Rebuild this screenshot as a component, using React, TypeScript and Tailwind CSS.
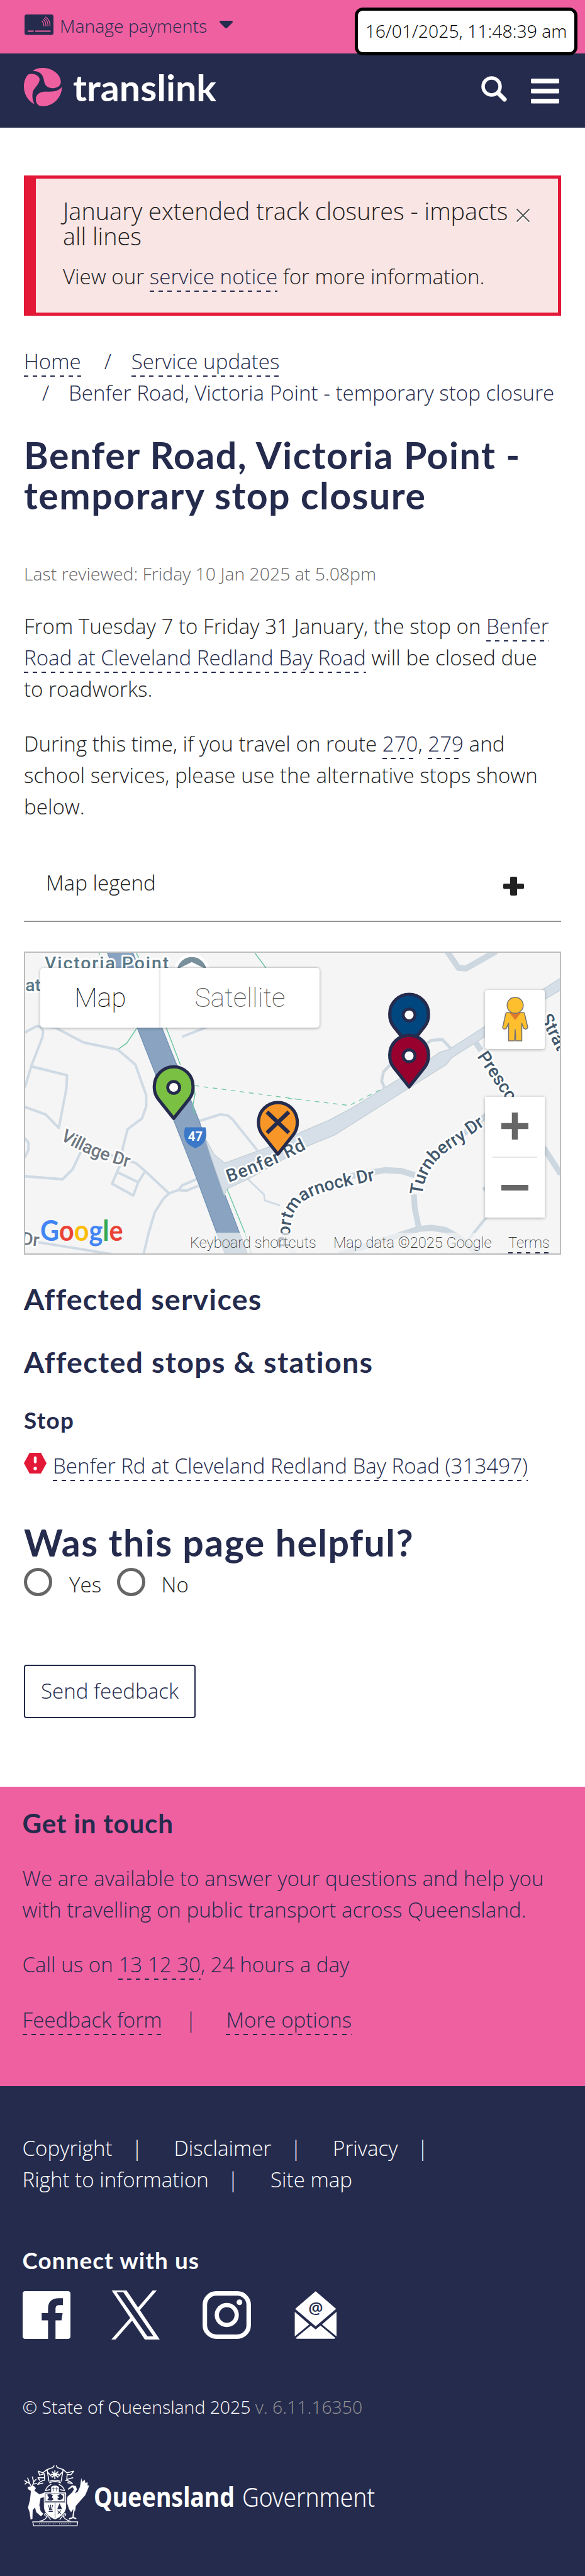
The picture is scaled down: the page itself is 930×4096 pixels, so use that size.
import React from "react";

const link =
  "text-[#252b4d] bg-[image:repeating-linear-gradient(90deg,#252b4d_0px,#252b4d_7px,transparent_7px,transparent_14.2px)] bg-[length:100%_2.4px] bg-no-repeat bg-bottom pb-[2.4px] box-decoration-clone";
const heading = "font-['Lato'] font-bold text-[#252b4d] whitespace-nowrap";
const body = "text-[33.13px] leading-[49.7px] whitespace-nowrap";

function TopBar() {
  return (
    <div className="relative h-[85px] bg-[#ef60a1]">
      <div className="flex items-start pl-[39px] pt-[23px]">
        <svg width="46" height="33" viewBox="0 0 46 33">
          <rect width="46" height="32.5" rx="3.5" fill="#252b4d" />
          <path d="M5 26.5h9.5M17 26.5h24.5" stroke="#ef60a1" strokeWidth="2" />
          <path
            d="M27.5 10.5c2.6 2 3.4 4.400 3.200 8M29.500 8c3.600 2.500 4.700 6 4.500 10.500M31.500 6c4.500 3 6 7.500 5.700 12.500M33.500 4c5.200 3.500 7.300 8.500 7 14.500"
            stroke="#ef60a1"
            strokeWidth="1.200"
            fill="none"
            strokeLinecap="round"
          />
        </svg>
        <span className="ml-[10px] -mt-[2px] text-[28.4px] leading-[40px] whitespace-nowrap text-[#252b4d]">Manage payments</span>
        <svg className="ml-[20px] mt-[10px]" width="21" height="12" viewBox="0 0 21 12">
          <path d="M2 0h17q3 .5 1.500 3l-8 8q-2 2-4 0l-8-8Q-1 .5 2 0z" fill="#252b4d" />
        </svg>
      </div>
      <div className="absolute left-[564px] top-[12px] z-10 flex h-[75.500px] w-[354px] items-center justify-center rounded-[13px] border-[5px] border-black bg-white text-[28.4px] whitespace-nowrap text-black">
        16/01/2025, 11:48:39 am
      </div>
    </div>
  );
}

function Header() {
  return (
    <header className="flex h-[118px] justify-between bg-[#252b4d]">
      <svg className="ml-[38px] mt-[23px]" width="310" height="64" viewBox="0 0 310 64">
        <g transform="scale(.5931 .2629) translate(-64 -411)" fill="#ef60a1">
          <path d="M88 430C95 415 105 411 115 411C140 411 163 450 163 497C163 522 150 536 140 534C125 530 120 515 118 490C116 455 108 428 88 430Z" />
          <path d="M76 450C90 440 103 455 106 475C108 505 92 530 88 555C85 585 88 610 92 630C75 610 64 570 64 525C64 495 68 465 76 450Z" />
          <path d="M166 525C166 590 142 643 115 643C102 643 96 625 96 600C96 575 105 557 118 555C135 553 155 560 166 525Z" />
        </g>
        <text x="78" y="52.500" fontFamily="Lato" fontWeight="700" fontSize="57" fill="#fff" textLength="228" lengthAdjust="spacingAndGlyphs">
          translink
        </text>
      </svg>
      <div className="flex pr-[41px]">
        <svg className="mt-[36px]" width="41" height="41" viewBox="0 0 41 41" fill="none" stroke="#fff" strokeLinecap="round">
          <circle cx="16.500" cy="16.500" r="13.500" strokeWidth="5.500" />
          <path d="M27 27l10 10" strokeWidth="7" />
        </svg>
        <svg className="ml-[38px] mt-[39.500px]" width="45" height="40" viewBox="0 0 45 40" fill="#fff">
          <rect width="45" height="7.500" rx="1.500" />
          <rect y="16" width="45" height="7.500" rx="1.500" />
          <rect y="32" width="45" height="7.500" rx="1.500" />
        </svg>
      </div>
    </header>
  );
}

function Alert() {
  return (
    <div className="relative mx-[38px] h-[223px] border-[5px] border-l-[19px] border-[#e31837] bg-[#f9e5e3] pl-[43px] pt-[31.500px] text-[#222]">
      <div className="text-[37.860px] leading-[40.300px] whitespace-nowrap">
        January extended track closures - impacts
        <br />
        all lines
      </div>
      <p className={`${body} mt-[19px]`}>
        View our <a className={link}>service notice</a> for more information.
      </p>
      <svg className="absolute top-[47px] right-[44px]" width="23" height="25" viewBox="0 0 23 25">
        <path d="M1.500 3.500l20 20M21.500 3.500l-20 20" stroke="#fff" strokeWidth="2" />
        <path d="M1.500 1.500l20 20M21.500 1.500l-20 20" stroke="#555" strokeWidth="1.800" />
      </svg>
    </div>
  );
}

type PinProps = { x: number; y: number; fill: string; closed?: boolean };

function Pin({ x, y, fill, closed }: PinProps) {
  return (
    <g transform={`translate(${x} ${y})`} stroke="#252b4d">
      <path
        d="M0 -4L-31 -43C-38 -52 -39.500 -60 -39 -69A39 39 0 0 1 39 -69C39.500 -60 38 -52 31 -43Z"
        fill={fill}
        strokeWidth="6.500"
        strokeLinejoin="round"
      />
      {closed ? (
        <path d="M-22 -89L22 -47M22 -89L-22 -47" strokeWidth="8" />
      ) : (
        <circle cy="-66.500" r="12" fill="#fff" strokeWidth="6" />
      )}
    </g>
  );
}

function MapDrawing() {
  return (
    <svg className="absolute inset-0 h-full w-full" viewBox="50.700 19.400 1077.500 605.500" preserveAspectRatio="none" fill="none">
      <rect x="40" y="10" width="1100" height="640" fill="#f5f5f5" />
      <g transform="scale(.38265 .40816)" strokeLinejoin="round">
        <g stroke="#cfdae4" strokeWidth="13">
          <path d="M130 441L192 410C230 412 235 440 215 485L165 605L130 715" />
          <path d="M192 410L290 416L440 490L620 525L712 598L770 750V805L748 865L672 918L648 1005L630 1100" />
          <path d="M165 608L353 652L350 715L310 912L240 845L130 808" />
          <path d="M130 962L150 985V1020L130 1058" />
          <path d="M130 1150L330 1165L383 1115L425 1030" />
          <path d="M630 1100L590 1187L702 1245L728 1180L765 1125M728 1180L618 1130" />
          <path d="M560 1040L715 1085L765 1125L890 1235L940 1218L960 1195L1035 1165M940 1218L980 1222L1045 1197M890 1235L860 1262L815 1328L780 1440L755 1540" />
          <path d="M200 1476L360 1500L600 1537" />
          <path d="M965 460L1100 410" strokeLinecap="round" />
          <path d="M1035 882L1160 845L1200 850L1225 870L1355 1022" />
          <path d="M1300 1160L1390 1240L1395 1270L1475 1295" strokeWidth="9" />
          <path d="M1505 1440L1545 1540" strokeWidth="34" stroke="#e1e7ed" />
        </g>
        <path d="M562 40L722 416L1035 1160L1140 1428L1188 1540H1306L1180 1230L1050 880L852 416L697 40Z" fill="#8aa3c0" stroke="#6d8fb5" strokeWidth="4" />
        <g stroke="#6fc7a3" strokeWidth="5">
          <path d="M720 420L668 493L625 522M875 416L950 600M1020 705L1027 745L1015 805L1025 845M1195 1212L1290 1430L1327 1540M1343 49L1400 122M718 49L732 75M520 45L526 58" />
          <path d="M1025 703L1568 770" strokeDasharray="24 24" strokeWidth="4" />
        </g>
      </g>
      <path
        d="M413 392L432 426L453 443L543 410L599 384L662 357L704 335L805 273L863 236L886 220L905 214L978 167L1130 70V94L1098 113L978 188L910 231L899 245L840 282L675 386L617 410L500 475L457 495L452 508L425 430Z"
        fill="#d6dfe7"
        stroke="#c0ccd5"
        strokeWidth="1.500"
      />
      <g transform="translate(580 0) scale(.38201 .40816)" stroke="#ccd7e0" strokeWidth="30" strokeLinejoin="round">
        <path d="M840 40L900 122L940 125L1100 40" />
        <path d="M860 520L815 475L755 480L735 495M540 600L505 635L495 680L510 715" strokeWidth="15" />
        <path d="M990 490L1020 530" />
        <path d="M330 1150L450 1130L515 1120L600 1125L670 1145" />
        <path d="M665 1240L670 1310L690 1400" />
        <path d="M270 1537L690 1410L760 1405L830 1415L900 1450L1010 1540" />
        <path d="M1050 1350L955 1460M1030 1205L1060 1240" strokeWidth="14" />
        <path d="M1350 1010L1440 1140" />
        <path d="M900 960L1060 840" />
        <path d="M0 765L325 801L505 715" stroke="#6fc7a3" strokeWidth="4" strokeDasharray="24 24" />
      </g>
      <circle cx="386.500" cy="58" r="33" fill="#78909c" stroke="#fff" strokeWidth="6" />
      <path d="M362 50L386.500 38L411 50V70H362Z" fill="#fff" />
      <defs>
        <path id="village" d="M121 395Q180 432 264 453" />
        <path id="benfer" d="M461 482Q540 455 625 411" />
        <path id="port" d="M585 613C583 575 586 555 597 536C610 512 650 500 706 488L790 471" />
        <path id="turn" d="M851 508C854 476 866 452 885 433C905 413 930 403 948 387L990 358" />
        <path id="presc" d="M961 228L1040 345" />
        <path id="stra" d="M1088 150L1150 270" />
      </defs>
      <g fontFamily="Roboto" fontWeight="500" fontSize="36" stroke="#fff" strokeWidth="7" strokeLinejoin="round" className="[paint-order:stroke]">
        <text x="90" y="52" fill="#5a7886" textLength="250">Victoria Point</text>
        <text x="51" y="97" fill="#5a7886">at</text>
        <text fill="#6f7882"><textPath href="#village" textLength="150">Village Dr</textPath></text>
        <text fill="#6f7882" transform="translate(42 607) rotate(6)">Dr</text>
        <g fill="#43586c">
          <text><textPath href="#benfer" textLength="171">Benfer Rd</textPath></text>
          <text><textPath href="#port" textLength="252">Portmarnock Dr</textPath></text>
          <text><textPath href="#turn" textLength="198">Turnberry Dr</textPath></text>
          <text><textPath href="#presc">Prescott</textPath></text>
          <text><textPath href="#stra">Strat</textPath></text>
        </g>
      </g>
      <path d="M373 371H414C419 392 414 405 393.500 413C373 405 368 392 373 371Z" fill="#3c78c8" />
      <text x="393.500" y="398" textAnchor="middle" fontFamily="Roboto" fontWeight="700" fontSize="26" fill="#fff">47</text>
      <Pin x={350} y={357} fill="#7ac143" />
      <Pin x={560} y={429} fill="#f89728" closed />
      <Pin x={824.5} y={211} fill="#00467f" />
      <Pin x={824.5} y={293.5} fill="#98002e" />
      <g fontFamily="Lato" fontWeight="700" fontSize="58" stroke="#f5f5f5" strokeWidth="5" strokeLinejoin="round" className="[paint-order:stroke]">
        <text x="81" y="600" textLength="167" lengthAdjust="spacingAndGlyphs">
          <tspan fill="#4285f4">G</tspan>
          <tspan fill="#ea4335">o</tspan>
          <tspan fill="#fbbc05">o</tspan>
          <tspan fill="#4285f4">g</tspan>
          <tspan fill="#34a853">l</tspan>
          <tspan fill="#ea4335">e</tspan>
        </text>
      </g>
    </svg>
  );
}

function MapPanel() {
  return (
    <div className="relative mt-[47.300px] h-[482px] w-[854px] overflow-hidden border-2 border-[#bdbdbd] font-['Roboto'] font-thin">
      <MapDrawing />
      <div className="absolute left-[24px] top-[24px] flex h-[95px] rounded-[5px] bg-white text-[42.600px] shadow-[0_1px_5px_rgba(0,0,0,0.3)]">
        <div className="flex w-[191px] items-center justify-center text-black">Map</div>
        <div className="flex w-[253px] items-center justify-center text-[#565656] shadow-[-1px_0_3px_rgba(0,0,0,0.2)]">Satellite</div>
      </div>
      <div className="absolute left-[731px] top-[59px] flex h-[94px] w-[95px] items-center justify-center rounded-[4px] bg-white shadow-[0_1px_5px_rgba(0,0,0,0.3)]">
        <svg width="42" height="71" viewBox="0 0 42 71" stroke="#737373" strokeWidth="1.500" strokeLinejoin="round">
          <path d="M8 25H34Q35.500 25 36 27L41 49Q38 53 34.500 50L31.500 42V70H22L21 52L20 70H10.500V42L7 50Q3 53 1 49L6 27Q6.500 25 8 25Z" fill="#fdbf2d" />
          <path d="M12 25.500H30L21 37Z" fill="#e0792c" stroke="none" />
          <circle cx="21" cy="13.500" r="12.800" fill="#fdbf2d" />
        </svg>
      </div>
      <div className="absolute left-[731px] top-[229px] flex h-[192px] w-[95px] flex-col items-center bg-white shadow-[0_1px_5px_rgba(0,0,0,0.3)]">
        <svg className="mt-[25px]" width="43" height="43" viewBox="0 0 43 43">
          <path d="M21.500 0V43M0 21.500H43" stroke="#666" strokeWidth="9.500" />
        </svg>
        <div className="mt-[27px] h-[2px] w-[71px] bg-[#e6e6e6]" />
        <div className="mt-[43px] h-[9px] w-[43px] bg-[#666]" />
      </div>
      <div className="absolute right-0 bottom-0 flex h-[33px] w-[590px] items-center bg-[rgba(245,245,245,0.7)] pl-[2px] text-[23.700px] whitespace-nowrap text-black">
        <span className="w-[228px]">Keyboard shortcuts</span>
        <span className="w-[278px]">Map data ©2025 Google</span>
        <span className="h-[33px] bg-[image:repeating-linear-gradient(90deg,#252b4d_0px,#252b4d_7px,transparent_7px,transparent_14.2px)] bg-[length:100%_2px] bg-bottom bg-no-repeat leading-[33px]">Terms</span>
      </div>
    </div>
  );
}

function Crest() {
  return (
    <svg className="shrink-0" width="104" height="97" viewBox="25 35 395 368" fill="#fff" stroke="#fff" strokeLinejoin="round" strokeLinecap="round">
      <path d="M50 165L85 160L97 172L88 188L118 210L150 200L155 225L125 232L118 275L125 310L142 328L128 342L100 318L92 288L78 305L76 358L66 362L60 318L50 290L62 245L68 190L50 178Z" strokeWidth="1" />
      <path d="M72 165L60 145L30 128M60 145L48 112M45 137L32 148M75 163L84 135L76 105M84 135L98 120M84 148L102 145" fill="none" strokeWidth="6" />
      <path d="M372 115L378 135L392 122L396 142L410 138L408 156L418 158L408 185L395 215L360 255L338 280L334 310L322 300L310 318L298 300L285 260L288 225L315 200L328 180L318 166L295 182L290 178L315 156L338 160L345 180L332 205L350 195L364 165Z" strokeWidth="1" />
      <path d="M330 280L322 345M322 350L300 358M322 350L338 356" fill="none" strokeWidth="8" />
      <path d="M148 200H278V290C275 320 250 345 213 360C175 345 150 320 148 290Z" strokeWidth="3" />
      <path d="M155 206H271V254H155ZM213 262V352M150 258H276" fill="none" stroke="#252b4d" strokeWidth="3" />
      <path d="M165 212L180 208L200 214L194 228L205 240L190 248L166 245L176 230ZM225 220L245 208L262 220L258 240L238 245L224 238L240 228Z" fill="#252b4d" stroke="none" />
      <path d="M174 276L180 300M186 274V300M198 276L192 300M178 304H196M176 314H198M228 310L248 328M248 308L230 328" fill="none" stroke="#252b4d" strokeWidth="4" />
      <path d="M240 265L256 300H226Z" fill="#252b4d" stroke="none" />
      <path d="M190 200V165Q212 150 236 165V200Z" />
      <path d="M204 168V190M222 168V190M197 176H211M215 176H229" fill="none" stroke="#252b4d" strokeWidth="3" />
      <path d="M188 150Q160 165 155 188L180 182M238 150Q266 165 270 188L246 182M180 140Q212 125 246 140M185 130Q212 120 240 130M150 125Q120 130 108 150L140 142M276 125Q306 130 318 145L290 140" fill="none" strokeWidth="6" />
      <path d="M176 130L165 60L200 48M165 60L140 80L112 70L120 95L148 85L150 120M250 130L262 60L226 48M262 60L284 80L326 70L308 92L286 90L284 120L320 110M150 110L110 110L120 125M190 100L172 80M236 100L252 80M200 48L207 38M226 48L222 38" fill="none" strokeWidth="6" />
      <path d="M212 68V115M190 90H236M196 74L230 106M230 74L196 106" fill="none" strokeWidth="7" />
      <path d="M78 376H350L346 400H84Z" fill="none" strokeWidth="5" />
      <path d="M120 372Q150 368 165 345Q140 335 155 325Q172 340 185 362M306 372Q280 368 262 345Q288 335 273 325Q256 340 242 362" fill="none" strokeWidth="5" />
      <path d="M118 388H185M202 388H220M238 388H312" fill="none" strokeWidth="7" strokeDasharray="2 9" strokeLinecap="butt" />
    </svg>
  );
}

function SocialIcons() {
  return (
    <div className="flex h-[78px] items-center">
      <svg width="76" height="76" viewBox="60 1005 128 288" preserveAspectRatio="none">
        <path
          fillRule="evenodd"
          fill="#fff"
          d="M66 1005H182Q188 1007 188 1020V1278Q188 1291 182 1293H148V1181H164L167 1138H148V1115C148 1095 151 1089 160 1089H168V1048H158C138 1048 128 1070 128 1110V1138H111V1181H128V1293H66Q60 1291 60 1278V1020Q60 1007 66 1005Z"
        />
      </svg>
      <svg className="ml-[65.500px]" width="77" height="78" viewBox="299 1002 130 296" preserveAspectRatio="none" fill="#fff">
        <path fillRule="evenodd" d="M300 1002H340L429 1298H389ZM313 1012L396 1279H412L331 1012Z" />
        <path d="M410 1002H421L375 1122L370 1106ZM352 1162L357 1178L310 1298H299Z" />
      </svg>
      <svg className="ml-[68px]" width="77" height="76" viewBox="0 0 97 96" fill="none" stroke="#fff">
        <rect x="4.500" y="4.500" width="88" height="87" rx="23" strokeWidth="9" />
        <circle cx="48.500" cy="48" r="20" strokeWidth="8.500" />
        <circle cx="74" cy="22.500" r="5.700" fill="#fff" stroke="none" />
      </svg>
      <svg className="ml-[69px]" width="67" height="76" viewBox="0 0 85 96" fill="#fff">
        <g transform="scale(.752 .3333) translate(-790 -1005)">
          <path d="M847 1005L902 1112L847 1218L792 1112ZM791 1130L830 1206L791 1278ZM903 1130L864 1206L903 1278ZM834 1213L847 1237L860 1213L900 1288Q899 1293 896 1293H798Q794 1293 794 1288Z" />
        </g>
        <text x="43" y="46" textAnchor="middle" fontFamily="Open Sans" fontWeight="600" fontSize="33" fill="#252b4d">@</text>
      </svg>
    </div>
  );
}

export default function App() {
  return (
    <div className="h-[4096px] w-[930px] overflow-hidden bg-white font-['Open_Sans',sans-serif] font-light">
      <TopBar />
      <Header />
      <main className="h-[2638px] pt-[76px]">
        <Alert />
        <div className="px-[38px] text-[#222]">
          <nav className={`${body} mt-[48.300px] text-[#252b4d]`}>
            <div className="flex h-[49.700px]">
              <span><a className={link}>Home</a></span>
              <span className="ml-[37px] w-[43px]">/</span>
              <span><a className={link}>Service updates</a></span>
            </div>
            <div className="flex h-[49.700px] pl-[29px]">
              <span className="w-[42px]">/</span>
              <span>Benfer Road, Victoria Point - temporary stop closure</span>
            </div>
          </nav>
          <h1 className={`${heading} mt-[42.700px] text-[59px] leading-[64px] tracking-[0.026em]`}>
            Benfer Road, Victoria Point -<br />
            temporary stop closure
          </h1>
          <p className="mt-[72px] text-[28.400px] leading-[40px] text-[#666]">Last reviewed: Friday 10 Jan 2025 at 5.08pm</p>
          <p className={`${body} mt-[38.800px]`}>
            From Tuesday 7 to Friday 31 January, the stop on <a className={link}>Benfer<br />Road at Cleveland Redland Bay Road</a> will be closed due<br />
            to roadworks.
          </p>
          <p className={`${body} mt-[38px]`}>
            During this time, if you travel on route <a className={link}>270</a>, <a className={link}>279</a> and<br />
            school services, please use the alternative stops shown<br />
            below.
          </p>
          <div className="mt-[53.300px] flex h-[105px] justify-between border-b-2 border-[#949494] pl-[35px] pr-[59px]">
            <span className={`${body} pt-[18px]`}>Map legend</span>
            <svg className="mt-[33px]" width="33" height="30" viewBox="0 0 33 30" fill="#222">
              <rect x="11" width="11" height="30" rx="2" />
              <rect y="11" width="33" height="8.500" rx="2" />
            </svg>
          </div>
          <MapPanel />
          <h2 className={`${heading} mt-[40.300px] text-[46.600px] leading-[60px] tracking-[0.026em]`}>Affected services</h2>
          <h2 className={`${heading} mt-[39.300px] text-[46.600px] leading-[60px] tracking-[0.028em]`}>Affected stops &amp; stations</h2>
          <h3 className={`${heading} mt-[38.700px] text-[36.800px] leading-[50px] tracking-[0.036em]`}>Stop</h3>
          <div className={`${body} mt-[22.300px] flex`}>
            <svg className="mt-[4px] mr-[10px]" width="36" height="33" viewBox="0 0 36 33">
              <path d="M9 0H27L36 16.500L27 33H9L0 16.500Z" fill="#e31837" />
              <path d="M18 8V14.500" stroke="#fff" strokeWidth="4.500" strokeLinecap="round" />
              <circle cx="18" cy="25" r="2.700" fill="#fff" />
            </svg>
            <span><a className={link}>Benfer Rd at Cleveland Redland Bay Road (313497)</a></span>
          </div>
          <h2 className={`${heading} mt-[65.800px] text-[59px] leading-[64px] tracking-[0.025em]`}>Was this page helpful?</h2>
          <div className={`${body} flex h-[60px] pt-[8px]`}>
            <span className="h-[45px] w-[45px] rounded-full border-[5px] border-[#666]" />
            <span className="ml-[27px] w-[75.600px] pt-[2px]">Yes</span>
            <span className="h-[45px] w-[45px] rounded-full border-[5px] border-[#666]" />
            <span className="ml-[26px] pt-[2px]">No</span>
          </div>
          <button className="mt-[101.700px] flex h-[85px] w-[273px] items-center justify-center rounded-[4px] border-2 border-[#252b4d] text-[33.130px] font-light text-[#252b4d]">
            Send feedback
          </button>
        </div>
      </main>
      <section className="h-[476px] bg-[#ef60a1] pl-[35.500px] pt-[33px] text-[#252b4d]">
        <h2 className={`${heading} text-[42.200px] leading-[50px] tracking-[0.018em]`}>Get in touch</h2>
        <p className={`${body} mt-[38px]`}>
          We are available to answer your questions and help you<br />
          with travelling on public transport across Queensland.
        </p>
        <p className={`${body} mt-[38px]`}>
          Call us on <a className={link}>13 12 30</a>, 24 hours a day
        </p>
        <p className={`${body} mt-[38px] flex`}>
          <span><a className={link}>Feedback form</a></span>
          <span className="ml-[37px] w-[65px]">|</span>
          <span><a className={link}>More options</a></span>
        </p>
      </section>
      <footer className="h-[779px] bg-[#252b4d] pl-[35.500px] pt-[74px] text-white">
        <nav className={body}>
          <div className="flex">
            <span className="w-[173.400px]">Copyright</span>
            <span className="w-[67.600px]">|</span>
            <span className="w-[185px]">Disclaimer</span>
            <span className="w-[67.600px]">|</span>
            <span className="w-[134px]">Privacy</span>
            <span>|</span>
          </div>
          <div className="flex">
            <span className="w-[326px]">Right to information</span>
            <span className="w-[68.500px]">|</span>
            <span>Site map</span>
          </div>
        </nav>
        <h3 className="mt-[79px] mb-[22.500px] font-['Lato'] text-[36.800px] leading-[50px] font-bold tracking-[0.03em] whitespace-nowrap">Connect with us</h3>
        <SocialIcons />
        <p className="mt-[87px] text-[28.400px] leading-[40px] whitespace-nowrap">
          © State of Queensland 2025 <span className="text-[#949494]">v. 6.11.16350</span>
        </p>
        <div className="mt-[73px] ml-[2.500px] flex">
          <Crest />
          <svg width="460" height="97" viewBox="0 0 460 97" fill="#fff" fontFamily="Noto Sans" fontSize="42.500">
            <text x="7" y="66" fontWeight="700" textLength="224" lengthAdjust="spacingAndGlyphs">Queensland</text>
            <text x="243" y="66" textLength="211" lengthAdjust="spacingAndGlyphs">Government</text>
          </svg>
        </div>
      </footer>
    </div>
  );
}
